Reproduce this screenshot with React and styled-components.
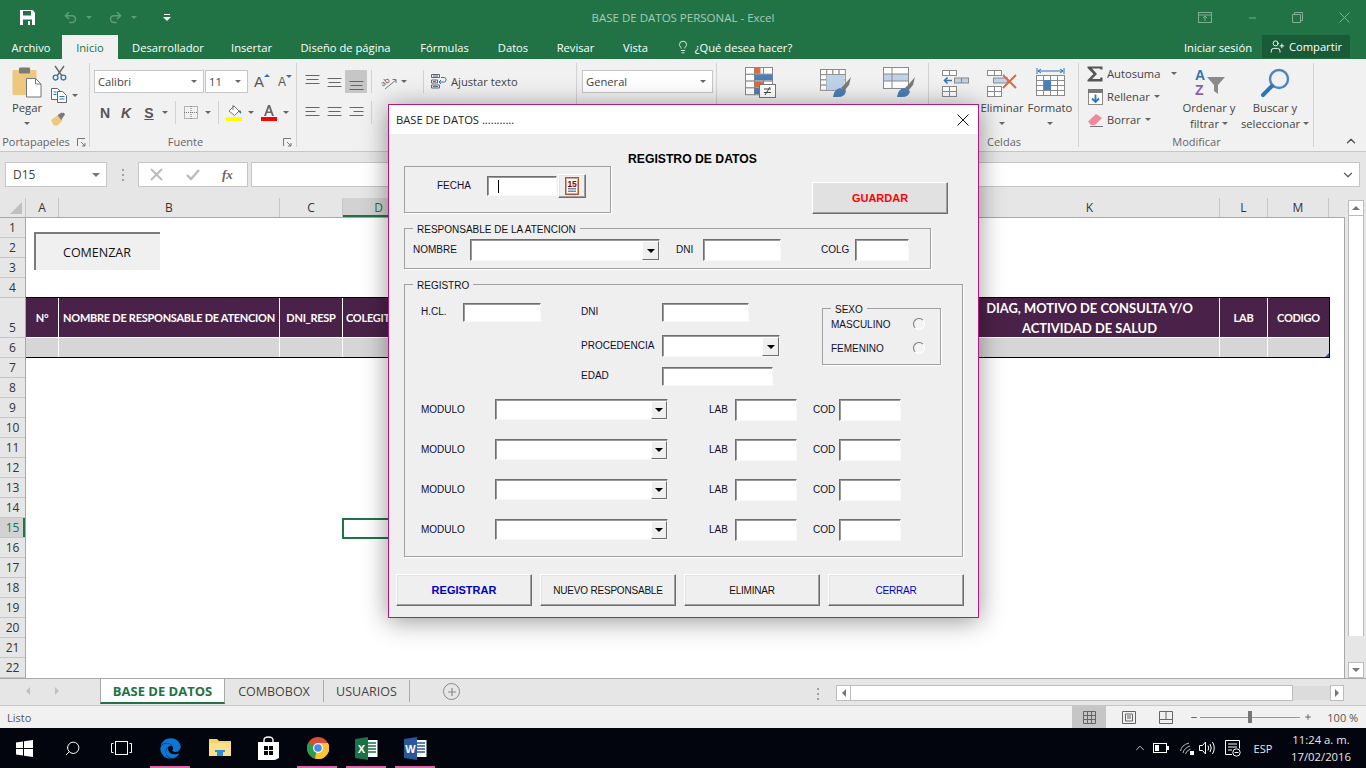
import React from 'react';
import styled, { createGlobalStyle } from 'styled-components';
import { FaEdge } from 'react-icons/fa';
import { Undo2, Redo2, ChevronUp, ChevronDown, UserPlus, Lightbulb, Search, Plus, Minus } from 'lucide-react';

const GlobalStyle = createGlobalStyle`
  html, body { margin: 0; padding: 0; height: 100%; overflow: hidden; }
  body { background: #fff; font-family: "Open Sans", "Noto Sans", sans-serif; font-size: 12px; color: #444; }
  * { box-sizing: border-box; }
  #root { height: 768px; }
`;

const Page = styled.div`
  position: relative;
  width: 1366px;
  height: 768px;
  display: flex;
  flex-direction: column;
  overflow: hidden;
`;

// ---------- title bar + tabs
const TitleBar = styled.div`
  height: 35px;
  background: #217346;
  display: flex;
  align-items: center;
  padding-left: 20px;
  color: #a9cbb7;
`;
const QatSlot = styled.div`
  display: flex;
  align-items: center;
  justify-content: center;
  width: ${p => p.$w}px;
  margin-left: ${p => p.$ml || 0}px;
  color: ${p => p.$c || '#5f9c7c'};
`;
const Caret = styled.span`
  display: inline-block;
  width: 0;
  height: 0;
  border-left: 3px solid transparent;
  border-right: 3px solid transparent;
  border-top: 3px solid ${p => p.$c || '#666'};
  margin-left: ${p => p.$ml || 0}px;
  flex: none;
`;
const WindowTitle = styled.div`
  width: ${p => p.$w}px;
  margin-left: ${p => p.$ml}px;
  text-align: center;
  font-size: 11.5px;
  white-space: nowrap;
`;
const TabBar = styled.div`
  height: 24px;
  background: #217346;
  display: flex;
  align-items: stretch;
  color: #fff;
`;
const Tab = styled.div`
  width: ${p => p.$w}px;
  margin-left: ${p => p.$ml || 0}px;
  display: flex;
  align-items: center;
  justify-content: center;
  font-size: 11.2px;
  white-space: nowrap;
  background: ${p => (p.$active ? '#f1f1f1' : 'transparent')};
  color: ${p => (p.$active ? '#217346' : '#fff')};
`;
const ShareButton = styled.div`
  width: 88px;
  margin-left: 4px;
  height: 23px;
  background: #195a37;
  display: flex;
  align-items: center;
  justify-content: center;
  gap: 4px;
  font-size: 11.2px;
`;

// ---------- ribbon
const Ribbon = styled.div`
  height: 93px;
  background: #f1f1f1;
  border-bottom: 1px solid #c6c6c6;
  display: flex;
  flex: none;
`;
const RibbonGroup = styled.div`
  position: relative;
  width: ${p => p.$w}px;
  display: flex;
  flex-direction: column;
  padding: 4px 0 0 0;
  &::after {
    content: '';
    position: absolute;
    right: 0;
    top: 4px;
    bottom: 4px;
    width: 1px;
    background: #d2d2d2;
  }
`;
const GroupBody = styled.div`
  flex: 1;
  display: flex;
  flex-direction: ${p => (p.$col ? 'column' : 'row')};
  padding-left: ${p => p.$pl || 0}px;
  min-height: 0;
`;
const GroupLabel = styled.div`
  height: 18px;
  line-height: 18px;
  text-align: center;
  font-size: 11px;
  color: #666;
  position: relative;
  white-space: nowrap;
  padding-right: ${p => p.$pr || 0}px;
`;
const Launcher = styled.svg`
  position: absolute;
  right: ${p => p.$r || 3}px;
  top: 5px;
`;
const ToolRow = styled.div`
  display: flex;
  align-items: center;
  height: ${p => p.$h || 23}px;
  margin-top: ${p => p.$mt || 0}px;
`;
const Tool = styled.div`
  display: flex;
  align-items: center;
  justify-content: center;
  flex: none;
  width: ${p => p.$w}px;
  height: 100%;
  margin-left: ${p => p.$ml || 0}px;
  background: ${p => (p.$on ? '#c6c6c6' : 'transparent')};
`;
const ToolSep = styled.div`
  width: 1px;
  height: 23px;
  background: #d2d2d2;
  margin-left: ${p => p.$ml || 0}px;
  flex: none;
`;
const RibbonCombo = styled.div`
  width: ${p => p.$w}px;
  height: 23px;
  margin-left: ${p => p.$ml || 0}px;
  background: #fff;
  border: 1px solid #c6c6c6;
  display: flex;
  align-items: center;
  justify-content: space-between;
  padding: 0 6px 0 3px;
  font-size: 11.2px;
  color: #444;
  flex: none;
`;
const FontLetter = styled.span`
  font-family: "Liberation Sans", sans-serif;
  font-weight: ${p => (p.$light ? 400 : 700)};
  font-size: ${p => p.$size || 14}px;
  font-style: ${p => (p.$i ? 'italic' : 'normal')};
  text-decoration: ${p => (p.$u ? 'underline' : 'none')};
  color: #555;
`;
const GrowMark = styled.span`
  width: 0;
  height: 0;
  align-self: flex-start;
  margin-top: ${p => (p.$down ? 5 : 4)}px;
  border-left: 3px solid transparent;
  border-right: 3px solid transparent;
  border-top: ${p => (p.$down ? '3px solid #2e75b6' : '0')};
  border-bottom: ${p => (p.$down ? '0' : '3px solid #2e75b6')};
`;
const SmallText = styled.span`
  font-size: 11.2px;
  color: #444;
  white-space: nowrap;
  margin-left: ${p => p.$ml || 0}px;
`;
const BigButton = styled.div`
  width: ${p => p.$w}px;
  margin-left: ${p => p.$ml || 0}px;
  padding-top: 4px;
  display: flex;
  flex-direction: column;
  align-items: center;
  font-size: 11.3px;
  line-height: 16px;
  color: #444;
  flex: none;
  white-space: nowrap;
`;
const BigIcon = styled.div`
  height: 31px;
  display: flex;
  align-items: center;
  justify-content: center;
  margin-bottom: 2px;
`;
const CaretLine = styled.div`
  height: 15px;
  display: flex;
  align-items: center;
  justify-content: center;
  gap: 3px;
`;
const StackColumn = styled.div`
  display: flex;
  flex-direction: column;
  width: ${p => p.$w}px;
  margin-left: ${p => p.$ml || 0}px;
  margin-top: ${p => p.$mt || 0}px;
  flex: none;
`;
const StackItem = styled.div`
  height: 23px;
  display: flex;
  align-items: center;
  font-size: 11.2px;
  color: #444;
  white-space: nowrap;
  gap: ${p => p.$gap ?? 4}px;
`;
const IconBox = styled.span`
  width: 16px;
  display: flex;
  justify-content: center;
  flex: none;
`;
const CollapseSlot = styled.div`
  flex: 1;
  display: flex;
  align-items: flex-end;
  justify-content: flex-end;
  padding: 0 8px 3px 0;
  color: #555;
`;

// ---------- formula bar
const FormulaBar = styled.div`
  height: 46px;
  flex: none;
  background: #e6e6e6;
  padding: 10px 6px 0 5px;
  display: flex;
  align-items: flex-start;
`;
const NameBox = styled.div`
  width: 102px;
  height: 25px;
  background: #fff;
  border: 1px solid #c6c6c6;
  display: flex;
  align-items: center;
  justify-content: space-between;
  padding: 0 6px 0 7px;
  font-size: 12px;
  color: #444;
`;
const Grip = styled.div`
  width: 2px;
  height: 12px;
  margin: 7px 14px 0 15px;
  background: repeating-linear-gradient(to bottom, #a0a0a0 0 2px, transparent 2px 5px);
`;
const FxBox = styled.div`
  width: 110px;
  height: 25px;
  background: #fff;
  border: 1px solid #c6c6c6;
  display: flex;
  align-items: center;
  justify-content: space-around;
  padding: 0 3px 0 0;
`;
const FxText = styled.span`
  font-family: "Liberation Serif", serif;
  font-style: italic;
  font-weight: 700;
  font-size: 13px;
  color: #666;
`;
const FormulaInput = styled.div`
  flex: 1;
  margin-left: 3px;
  height: 25px;
  background: #fff;
  border: 1px solid #c6c6c6;
  display: flex;
  align-items: center;
  justify-content: flex-end;
  padding-right: 4px;
  color: #666;
`;

// ---------- sheet
const SheetArea = styled.div`
  position: relative;
  height: 480px;
  flex: none;
  display: flex;
  background: #e6e6e6;
`;
const SheetMain = styled.div`
  width: 1345px;
  display: flex;
  flex-direction: column;
`;
const ColumnHead = styled.div`
  height: 20px;
  flex: none;
  display: flex;
  border-bottom: 1px solid #a8a8a8;
`;
const Corner = styled.div`
  width: 26px;
  position: relative;
  border-right: 1px solid #c6c6c6;
  &::after {
    content: '';
    position: absolute;
    right: 3px;
    bottom: 3px;
    border-style: solid;
    border-width: 0 0 12px 12px;
    border-color: transparent transparent #c0c0c0 transparent;
  }
`;
const ColCell = styled.div`
  width: ${p => p.$w}px;
  flex: none;
  text-align: center;
  line-height: 19px;
  font-size: 12px;
  color: ${p => (p.$sel ? '#217346' : '#333')};
  background: ${p => (p.$sel ? '#d2d2d2' : 'transparent')};
  border-right: 1px solid #c6c6c6;
  box-shadow: ${p => (p.$sel ? 'inset 0 -2px 0 #217346' : 'none')};
`;
const SheetBody = styled.div`
  flex: 1;
  display: flex;
  min-height: 0;
`;
const RowHeads = styled.div`
  width: 26px;
  flex: none;
  display: flex;
  flex-direction: column;
  border-right: 1px solid #a8a8a8;
`;
const RowCell = styled.div`
  height: ${p => p.$h}px;
  flex: none;
  display: flex;
  align-items: flex-end;
  justify-content: center;
  font-size: 12px;
  line-height: 18px;
  color: ${p => (p.$sel ? '#217346' : '#333')};
  background: ${p => (p.$sel ? '#d2d2d2' : 'transparent')};
  border-bottom: 1px solid #c6c6c6;
  box-shadow: ${p => (p.$sel ? 'inset -2px 0 0 #217346' : 'none')};
`;
const CellArea = styled.div`
  position: relative;
  flex: 1;
  background: #fff;
  padding-top: 79px;
  overflow: hidden;
  border-right: 1px solid #a8a8a8;
`;
const DataTable = styled.div`
  width: 1304px;
  border: solid #000;
  border-width: 1px 1px 1px 0;
`;
const TableRow = styled.div`
  display: flex;
  height: ${p => p.$h}px;
  background: ${p => p.$bg};
  border-top: ${p => (p.$split ? '1px solid #fff' : '0')};
`;
const TableCell = styled.div`
  width: ${p => p.$w}px;
  flex: none;
  display: flex;
  align-items: center;
  justify-content: ${p => (p.$left ? 'flex-start' : 'center')};
  padding: 0 ${p => (p.$left ? 3 : 0)}px;
  text-align: center;
  font-family: Lato, "Open Sans", sans-serif;
  font-weight: 700;
  font-size: ${p => (p.$big ? 12.9 : 11)}px;
  letter-spacing: ${p => (p.$big ? 0 : -0.27)}px;
  line-height: 20px;
  color: #fff;
  white-space: nowrap;
  border-right: 1px solid #fff;
  &:last-child { border-right: 0; }
`;
const ResizeMark = styled.div`
  position: absolute;
  left: 1299px;
  top: 135px;
  border-style: solid;
  border-width: 0 0 4px 4px;
  border-color: transparent transparent #3b55b0 transparent;
`;
const StartButton = styled.div`
  position: absolute;
  left: 8px;
  top: 14px;
  width: 126px;
  height: 38px;
  background: #f0f0f0;
  border-top: 2px solid #7a7a7a;
  border-left: 2px solid #7a7a7a;
  display: flex;
  align-items: center;
  justify-content: center;
  font-size: 12.5px;
  color: #111;
  padding-right: 2px;
`;
const SelectedCell = styled.div`
  position: absolute;
  left: 316px;
  top: 300px;
  width: 70px;
  height: 21px;
  border: 2px solid #217346;
`;
const VScroll = styled.div`
  width: 21px;
  padding: 2px 2px 0 3px;
  display: flex;
  flex-direction: column;
  background: #e6e6e6;
`;
const ScrollButton = styled.div`
  width: ${p => p.$w || 16}px;
  height: ${p => p.$h || 16}px;
  flex: none;
  background: #fff;
  border: 1px solid #bdbdbd;
  display: flex;
  align-items: center;
  justify-content: center;
`;
const VThumb = styled.div`
  flex: 1;
  background: #fff;
  border: 1px solid #bdbdbd;
  border-top: 0;
  border-bottom: 0;
  margin-bottom: 26px;
  width: 16px;
`;
const Tri = styled.span`
  width: 0;
  height: 0;
  border-style: solid;
  border-width: ${p => ({
    up: '0 4px 4px 4px',
    down: '4px 4px 0 4px',
    left: '4px 4px 4px 0',
    right: '4px 0 4px 4px',
  }[p.$d])};
  border-color: ${p => ({
    up: `transparent transparent ${p.$c || '#777'} transparent`,
    down: `${p.$c || '#777'} transparent transparent transparent`,
    left: `transparent ${p.$c || '#777'} transparent transparent`,
    right: `transparent transparent transparent ${p.$c || '#777'}`,
  }[p.$d])};
`;

// ---------- sheet tabs, status
const SheetTabs = styled.div`
  height: 28px;
  flex: none;
  background: #e6e6e6;
  border-top: 1px solid #a8a8a8;
  border-bottom: 1px solid #c6c6c6;
  display: flex;
  align-items: flex-start;
`;
const TabNav = styled.div`
  width: 100px;
  height: 24px;
  display: flex;
  align-items: center;
  padding-left: 26px;
  gap: 25px;
`;
const SheetTab = styled.div`
  width: ${p => p.$w}px;
  height: ${p => (p.$active ? 25 : 22)}px;
  margin-top: ${p => (p.$active ? 0 : 1)}px;
  display: flex;
  align-items: center;
  justify-content: center;
  font-size: ${p => (p.$active ? 13 : 12.5)}px;
  white-space: nowrap;
  background: ${p => (p.$active ? '#fff' : 'transparent')};
  color: ${p => (p.$active ? '#217346' : '#444')};
  font-weight: ${p => (p.$active ? 700 : 400)};
  border-bottom: ${p => (p.$active ? '2px solid #217346' : '0')};
  border-left: ${p => (p.$active ? '1px solid #a8a8a8' : '0')};
  border-right: 1px solid #a8a8a8;
`;
const AddSheet = styled.div`
  width: 17px;
  height: 17px;
  margin: 4px 0 0 33px;
  border: 1.5px solid #888;
  border-radius: 50%;
  display: flex;
  align-items: center;
  justify-content: center;
  color: #888;
`;
const HScrollWrap = styled.div`
  margin-left: 376px;
  display: flex;
  align-items: center;
  height: 14px;
  margin-top: 7px;
  width: 508px;
  position: relative;
`;
const HGrip = styled.div`
  position: absolute;
  left: -19px;
  top: 2px;
  width: 2px;
  height: 12px;
  background: repeating-linear-gradient(to bottom, #a0a0a0 0 2px, transparent 2px 5px);
`;
const HThumb = styled.div`
  width: 442px;
  height: 16px;
  background: #fff;
  border: 1px solid #bdbdbd;
  border-left: 0;
`;
const HTrack = styled.div`
  flex: 1;
  height: 14px;
  background: #dcdcdc;
`;
const StatusBar = styled.div`
  height: 22px;
  flex: none;
  background: #f1f1f1;
  display: flex;
  align-items: center;
  padding-left: 7px;
  font-size: 11px;
  color: #555;
`;
const ViewButton = styled.div`
  width: ${p => p.$w}px;
  height: 22px;
  margin-left: ${p => p.$ml || 0}px;
  background: ${p => (p.$on ? '#c6c6c6' : 'transparent')};
  display: flex;
  align-items: center;
  justify-content: center;
  flex: none;
`;
const ZoomTrack = styled.div`
  position: relative;
  width: 100px;
  height: 1px;
  background: #999;
  margin: 0 4px 0 2px;
`;
const ZoomKnob = styled.div`
  position: absolute;
  left: 48px;
  top: -6px;
  width: 4px;
  height: 12px;
  background: #777;
`;
const ZoomValue = styled.span`
  margin-left: 15px;
  white-space: nowrap;
`;

// ---------- taskbar
const Taskbar = styled.div`
  height: 40px;
  flex: none;
  background: #02050e;
  display: flex;
  align-items: center;
  color: #e8e8e8;
`;
const TaskSlot = styled.div`
  position: relative;
  width: ${p => p.$w || 49}px;
  height: 40px;
  flex: none;
  display: flex;
  align-items: center;
  justify-content: center;
  &::after {
    content: '';
    display: ${p => (p.$open ? 'block' : 'none')};
    position: absolute;
    left: 4px;
    right: 5px;
    bottom: 0;
    height: 2px;
    background: #d868a8;
  }
`;
const TrayItem = styled.div`
  width: ${p => p.$w}px;
  margin-left: ${p => p.$ml || 0}px;
  display: flex;
  align-items: center;
  justify-content: center;
  flex: none;
  font-size: 11px;
`;
const Clock = styled.div`
  width: 70px;
  margin-left: 13px;
  text-align: center;
  font-size: 11.3px;
  line-height: 17px;
  white-space: nowrap;
`;

// ---------- userform dialog
const Dialog = styled.div`
  position: absolute;
  left: 388px;
  top: 104px;
  width: 591px;
  height: 514px;
  background: #efefef;
  border: 1px solid #b5197f;
  box-shadow: 0 3px 24px rgba(0, 0, 0, 0.42);
  font-family: "Liberation Sans", Arial, sans-serif;
  font-size: 10px;
  color: #111;
  display: flex;
  flex-direction: column;
`;
const DialogTitle = styled.div`
  height: 29px;
  flex: none;
  background: #fff;
  display: flex;
  align-items: center;
  justify-content: space-between;
  padding: 0 9px 0 7px;
  font-family: "Open Sans", sans-serif;
  font-size: 11.2px;
  color: #222;
`;
const DialogBody = styled.div`
  flex: 1;
  padding: 16px 0 0 15px;
`;
const TopRow = styled.div`
  display: flex;
  height: 63px;
  align-items: flex-start;
`;
const FechaFrame = styled.div`
  width: 207px;
  height: 47px;
  margin-top: 16px;
  border: 1px solid #a0a0a0;
  box-shadow: 1px 1px 0 #fff;
  display: flex;
  align-items: center;
  padding: 0 0 8px 32px;
  flex: none;
`;
const Heading = styled.div`
  width: 201px;
  padding: 2px 0 0 17px;
  font-weight: 700;
  font-size: 12.2px;
  color: #000;
  flex: none;
  white-space: nowrap;
`;
const RaisedButton = styled.div`
  width: ${p => p.$w || 136}px;
  height: ${p => p.$h || 32}px;
  margin-top: ${p => p.$mt || 0}px;
  background: ${p => p.$bg || '#efefef'};
  border: 1px solid;
  border-color: #fff #6e6e6e #6e6e6e #fff;
  box-shadow: inset -1px -1px 0 #a0a0a0, inset 1px 1px 0 #e2e2e2;
  display: flex;
  align-items: center;
  justify-content: center;
  color: ${p => p.$c || '#111'};
  font-weight: ${p => (p.$bold ? 700 : 400)};
  font-size: ${p => (p.$bold ? 11 : 10)}px;
  letter-spacing: ${p => (p.$bold ? 0 : -0.2)}px;
  flex: none;
  white-space: nowrap;
`;
const CalendarButton = styled(RaisedButton)`
  width: 28px;
  height: 24px;
  margin-left: 1px;
`;
const GroupBox = styled.div`
  position: relative;
  width: ${p => p.$w}px;
  height: ${p => p.$h}px;
  margin-top: ${p => p.$mt || 0}px;
  margin-left: ${p => p.$ml || 0}px;
  border: 1px solid #a0a0a0;
  box-shadow: 1px 1px 0 #fff;
  flex: none;
`;
const Legend = styled.div`
  position: absolute;
  top: -6px;
  left: 8px;
  padding: 0 4px;
  background: #efefef;
  line-height: 13px;
  white-space: nowrap;
`;
const FieldRow = styled.div`
  display: flex;
  align-items: flex-start;
  padding: ${p => p.$pad || 0};
  height: ${p => (p.$h ? `${p.$h}px` : 'auto')};
`;
const Label = styled.div`
  width: ${p => (p.$w ? `${p.$w}px` : 'auto')};
  margin-left: ${p => p.$ml || 0}px;
  line-height: ${p => p.$lh || 22}px;
  white-space: nowrap;
  flex: none;
  color: #101030;
`;
const Sunken = styled.div`
  width: ${p => p.$w}px;
  height: ${p => p.$h}px;
  background: #fff;
  border: 1px solid;
  border-color: #6e6e6e #f8f8f8 #f8f8f8 #6e6e6e;
  box-shadow: inset 1px 1px 0 #9a9a9a;
  flex: none;
  display: flex;
  align-items: stretch;
  justify-content: flex-end;
  position: relative;
`;
const DropButton = styled.div`
  width: ${p => p.$w || 17}px;
  margin: 1px 0 0;
  background: #efefef;
  border: 1px solid;
  border-color: #fff #6e6e6e #6e6e6e #fff;
  display: flex;
  align-items: center;
  justify-content: center;
`;
const TextCaret = styled.div`
  position: absolute;
  left: 10px;
  top: 3px;
  width: 1px;
  height: 13px;
  background: #000;
`;
const RegistroTop = styled.div`
  display: flex;
  align-items: flex-start;
  padding: 18px 0 0 16px;
  height: 114px;
`;
const PatientGrid = styled.div`
  display: grid;
  grid-template-columns: 81px auto;
  grid-template-rows: 32px 32px 19px;
  margin-left: 40px;
  justify-items: start;
  align-items: start;
`;
const SexRows = styled.div`
  margin-top: 4px;
`;
const SexRow = styled.div`
  display: flex;
  align-items: center;
  height: 24px;
  padding-left: 8px;
`;
const Radio = styled.div`
  width: 12px;
  height: 12px;
  margin-top: -2px;
  border-radius: 50%;
  background: #f4f4f4;
  border: 1px solid;
  border-color: #777 #fff #fff #777;
`;
const ModuleList = styled.div`
  display: flex;
  flex-direction: column;
  gap: 18px;
  padding-left: 16px;
`;
const ActionRow = styled.div`
  display: flex;
  gap: 8px;
  margin: 17px 0 0 -8px;
`;

// ---------- icons
const AlignIcon = ({ y = 0, mode = 'center' }) => {
  const rows = [14, 12, 14];
  return (
    <svg width="15" height="16" viewBox="0 0 15 16" fill="none" stroke="#666" strokeWidth="1">
      {rows.map((w, i) => {
        const len = mode === 'left' || mode === 'right' ? (i === 1 ? 10 : 14) : w;
        const x = mode === 'left' ? 0.5 : mode === 'right' ? 14.5 - len : 7.5 - len / 2;
        const yy = y + 2.5 + i * 4;
        return <path key={i} d={`M${x} ${yy}h${len}`} />;
      })}
    </svg>
  );
};

const CellsIcon = ({ children, w = 30, h = 30 }) => (
  <svg width={w} height={h} viewBox={`0 0 ${w} ${h}`}>{children}</svg>
);

const GridLines = ({ x, y, cols, rows, cw, ch, stroke = '#8a8a8a', fill = '#fff' }) => (
  <g>
    {Array.from({ length: cols * rows }).map((_, i) => (
      <rect
        key={i}
        x={x + (i % cols) * cw + 0.5}
        y={y + Math.floor(i / cols) * ch + 0.5}
        width={cw}
        height={ch}
        fill={fill}
        stroke={stroke}
      />
    ))}
  </g>
);

const PasteIcon = () => (
  <svg width="31" height="31" viewBox="0 0 31 31">
    <rect x="0.5" y="3" width="24" height="25" rx="1" fill="#edc87e" />
    <rect x="7" y="0.5" width="11" height="6" rx="1" fill="#7a7a7a" />
    <path d="M14.5 11.5h9l5.5 5.5v13h-14.5z" fill="#fff" stroke="#777" />
    <path d="M23.5 11.5v5.5h5.5" fill="none" stroke="#777" />
  </svg>
);

const CutIcon = () => (
  <svg width="15" height="16" viewBox="0 0 15 16" fill="none">
    <path d="M3 1l7 10M12 1L5 11" stroke="#666" strokeWidth="1.4" />
    <circle cx="3.6" cy="12.6" r="2.4" stroke="#2e75b6" strokeWidth="1.3" />
    <circle cx="11.4" cy="12.6" r="2.4" stroke="#2e75b6" strokeWidth="1.3" />
  </svg>
);

const CopyIcon = () => (
  <svg width="16" height="15" viewBox="0 0 16 15" fill="#fff" stroke="#666">
    <path d="M0.5 0.5h6l3 3v8h-9z" />
    <path d="M6.5 3.5h5l4 4v7h-9z" />
    <path d="M2.5 4h3M2.5 6.5h3M8.5 8.5h5M8.5 11h5" stroke="#2e75b6" fill="none" />
  </svg>
);

const BrushIcon = () => (
  <svg width="17" height="15" viewBox="0 0 17 15">
    <path d="M0 9l7-5 5 6-5 5H3z" fill="#edc87e" />
    <path d="M7 4l4-3 1 1 1-1 2 2-2 3-1 1 0 1-1 1z" fill="#7a7a7a" />
  </svg>
);

const FillIcon = () => (
  <svg width="17" height="17" viewBox="0 0 17 17">
    <path d="M3 7l5-5 5 5-4.5 4.5z" fill="#fff" stroke="#777" />
    <path d="M7 1V6" stroke="#777" />
    <path d="M14 6q2 2 1 4-1-2-3-2z" fill="#2e75b6" />
    <rect x="0" y="13" width="16" height="4" fill="#ffff00" />
  </svg>
);

const FontColorIcon = () => (
  <svg width="16" height="17" viewBox="0 0 16 17">
    <path d="M3 12L7 1h2l4 11h-2l-1-3H6l-1 3zM6.6 7.4h2.8L8 3.4z" fill="#666" />
    <rect x="0" y="13" width="16" height="4" fill="#ff0000" />
  </svg>
);

const OrientationIcon = () => (
  <svg width="18" height="16" viewBox="0 0 18 16">
    <text x="2" y="11" transform="rotate(-38 6 9)" fontFamily="Open Sans" fontSize="8" fill="#555">ab</text>
    <path d="M6 15L17 6M13.5 5.5H17V9" stroke="#777" fill="none" />
  </svg>
);

const WrapIcon = () => (
  <svg width="16" height="15" viewBox="0 0 16 15" fill="none" stroke="#666">
    <path d="M0.5 0.5h8v3h-8zM0.5 6h6v3h-6zM0.5 11h8v3h-8z" />
    <path d="M2 2h5M2 7.5h3M2 12.5h5" stroke="#2e75b6" />
    <path d="M10 3.5h3.5q1.5 0 1.5 2.2t-1.5 2.3H8.5" stroke="#2e75b6" />
    <path d="M10 6L8 8l2 2" stroke="#2e75b6" />
  </svg>
);

const CondFormatIcon = () => (
  <CellsIcon w={31} h={31}>
    <GridLines x={0} y={0} cols={3} rows={4} cw={9} ch={6.8} />
    <rect x={9.5} y={1} width={6} height={5.8} fill="#dc6a43" />
    <rect x={9.5} y={7.6} width={18} height={5.6} fill="#4a7fb8" />
    <rect x={9.5} y={14.4} width={9} height={5.6} fill="#dc6a43" />
    <rect x={9.5} y={21} width={5} height={6} fill="#4a7fb8" />
    <rect x={14.5} y={17.5} width={16} height={13} fill="#fff" stroke="#777" />
    <path d="M19 22h7M19 25.5h7M25 20l-5 8" stroke="#444" fill="none" />
  </CellsIcon>
);

const TableFormatIcon = () => (
  <CellsIcon w={31} h={31}>
    <GridLines x={0} y={2} cols={4} rows={4} cw={6.2} ch={5.2} />
    <rect x={6.5} y={8} width={18} height={15} fill="#bfd2e8" />
    <path d="M31 10l-6 7-4 4 3 3 5-6z" fill="#7a7a7a" />
    <path d="M20 21q-6 1-7 9h5q7 0 8-6z" fill="#4a7fb8" />
  </CellsIcon>
);

const CellStyleIcon = () => (
  <CellsIcon w={32} h={31}>
    <rect x={0.5} y={0.5} width={25} height={21} fill="#fff" stroke="#8a8a8a" />
    <rect x={0.5} y={7} width={25} height={7} fill="#bfd2e8" stroke="#8a8a8a" />
    <path d="M9 0v22" stroke="#8a8a8a" />
    <path d="M32 10l-6 7-4 4 3 3 5-6z" fill="#7a7a7a" />
    <path d="M21 21q-6 1-7 9h5q7 0 8-6z" fill="#4a7fb8" />
  </CellsIcon>
);

const InsertCellsIcon = () => (
  <CellsIcon w={27} h={28}>
    <GridLines x={0} y={1} cols={2} rows={1} cw={7} ch={5} />
    <rect x={12.5} y={9} width={14} height={5} fill="#bfd2e8" stroke="#8a8a8a" />
    <path d="M19.5 9v5" stroke="#8a8a8a" />
    <path d="M10 11.5H3M5.5 8.5l-3 3 3 3" stroke="#2e75b6" strokeWidth="1.6" fill="none" />
    <GridLines x={0} y={17} cols={2} rows={2} cw={7} ch={5} />
  </CellsIcon>
);

const DeleteCellsIcon = () => (
  <CellsIcon w={31} h={28}>
    <GridLines x={0} y={1} cols={2} rows={1} cw={7} ch={5} />
    <rect x={6.5} y={9} width={14} height={5} fill="#bfd2e8" stroke="#8a8a8a" />
    <GridLines x={0} y={17} cols={2} rows={2} cw={7} ch={5} />
    <path d="M16 6l13 13M29 6L16 19" stroke="#dc6a43" strokeWidth="2" />
  </CellsIcon>
);

const FormatCellsIcon = () => (
  <CellsIcon w={29} h={30}>
    <path d="M1 0v6M28 0v6M2 3h25M5 1L2 3l3 2M24 1l3 2-3 2" stroke="#2e75b6" fill="none" />
    <GridLines x={0} y={7} cols={4} rows={4} cw={7} ch={5} />
    <rect x={8} y={12} width={7} height={10} fill="#4a7fb8" />
  </CellsIcon>
);

const SigmaIcon = () => (
  <svg width="16" height="16" viewBox="0 0 16 16">
    <path d="M0.5 0.5h15v3h-2l-.5-1H5l5 5.5L5 13h8l.5-1.5h2v4H.5v-1.5L6.5 8 .5 2z" fill="#555" />
  </svg>
);

const FillDownIcon = () => (
  <svg width="15" height="16" viewBox="0 0 15 16">
    <rect x="0.5" y="0.5" width="14" height="15" fill="#fff" stroke="#8a8a8a" />
    <rect x="0" y="0" width="15" height="4" fill="#777" />
    <path d="M7.5 5.5v7M4 9.5l3.5 3.5L11 9.5" stroke="#2e75b6" strokeWidth="1.8" fill="none" />
  </svg>
);

const EraserIcon = () => (
  <svg width="15" height="14" viewBox="0 0 15 14">
    <path d="M0 8.5L8 1l6 4-7 7H3z" fill="#ee8a9a" />
    <path d="M2 13.5h13" stroke="#777" />
  </svg>
);

const SortIcon = () => (
  <svg width="31" height="31" viewBox="0 0 31 31">
    <text x="1" y="13" fontFamily="Liberation Sans" fontWeight="700" fontSize="14" fill="#2e75b6">A</text>
    <text x="1" y="28" fontFamily="Liberation Sans" fontWeight="700" fontSize="14" fill="#8a5fb0">Z</text>
    <path d="M13 10h18l-7 8v9l-4-3v-6z" fill="#8a8a8a" />
  </svg>
);

const MagnifierIcon = () => (
  <svg width="29" height="30" viewBox="0 0 29 30" fill="none">
    <circle cx="18" cy="11" r="9" stroke="#4a85c0" strokeWidth="2.4" />
    <path d="M11 18L2 27" stroke="#2e75b6" strokeWidth="4" strokeLinecap="round" />
  </svg>
);

const CalendarIcon = () => (
  <svg width="14" height="18" viewBox="0 0 14 18">
    <rect x="0.5" y="0.5" width="13" height="17" fill="#d4a58e" stroke="#b0543a" />
    <rect x="2" y="2" width="10" height="14" fill="#fff" />
    <text x="7" y="9.5" textAnchor="middle" fontFamily="Liberation Sans" fontWeight="700" fontSize="8.5" fill="#800000">15</text>
    <path d="M3 11.5h8M3 13h8M3 14.5h8" stroke="#6a87b0" />
  </svg>
);

const WinLogo = () => (
  <svg width="17" height="17" viewBox="0 0 17 17" fill="#fff">
    <path d="M0 2.5l7-1v6.5H0zM8 1.3L17 0v8H8zM0 9h7v6.5l-7-1zM8 9h9v8l-9-1.3z" />
  </svg>
);

const TaskViewIcon = () => (
  <svg width="21" height="14" viewBox="0 0 21 14" fill="none" stroke="#fff">
    <rect x="4.5" y="0.5" width="12" height="13" />
    <path d="M2.5 2.5h-2v9h2M18.5 2.5h2v9h-2" />
  </svg>
);

const ExplorerIcon = () => (
  <svg width="22" height="20" viewBox="0 0 22 20">
    <path d="M0 1h8l2 2h12v15H0z" fill="#f6d365" />
    <path d="M0 5h22v13H0z" fill="#fbe08a" />
    <path d="M6 12h10v2h-2v4H8v-4H6z" fill="#2a8fd8" />
  </svg>
);

const StoreIcon = () => (
  <svg width="21" height="24" viewBox="0 0 21 24">
    <path d="M6 6V4q0-3 4.5-3T15 4v2" fill="none" stroke="#fff" strokeWidth="1.4" />
    <path d="M0 6h21v16l-4 2H0z" fill="#fff" />
    <path d="M6 10h4v4H6zM11 10h4v4h-4zM6 15h4v4H6zM11 15h4v4h-4z" fill="#02050e" />
  </svg>
);

const ChromeIcon = () => (
  <svg width="22" height="22" viewBox="0 0 22 22">
    <circle cx="11" cy="11" r="11" fill="#dd4b39" />
    <path d="M11 11L1.4 5.6A11 11 0 0 0 8 21.6z" fill="#2c9b4b" />
    <path d="M11 6h10a11 11 0 0 1-13 15.6z" fill="#f7c52f" />
    <circle cx="11" cy="11" r="5" fill="#fff" />
    <circle cx="11" cy="11" r="3.8" fill="#4a88ee" />
  </svg>
);

const OfficeDoc = ({ main, letter }) => (
  <svg width="23" height="23" viewBox="0 0 23 23">
    <rect x="9" y="3" width="13.5" height="17" fill="#fff" />
    <path d="M11 6h10M11 9h10M11 12h10M11 15h10" stroke={main} strokeWidth="1.4" />
    <path d="M0 2l13-2v23L0 21z" fill={main} />
    <text x="6.5" y="15.5" textAnchor="middle" fontFamily="Liberation Sans" fontWeight="700" fontSize="11" fill="#fff">{letter}</text>
  </svg>
);

const BatteryIcon = () => (
  <svg width="16" height="10" viewBox="0 0 16 10">
    <rect x="0.5" y="0.5" width="13" height="9" fill="none" stroke="#fff" />
    <rect x="2" y="2" width="4" height="6" fill="#fff" />
    <rect x="14" y="3" width="2" height="4" fill="#fff" />
  </svg>
);

const WifiIcon = () => (
  <svg width="14" height="13" viewBox="0 0 14 13" fill="none" stroke="#bbb">
    <path d="M0.5 9Q1.5 3 9 1M3 11Q4 6 10 4M5.5 12Q6 9 10.5 7" />
    <rect x="10" y="9" width="4" height="4" fill="#fff" stroke="none" />
  </svg>
);

const SpeakerIcon = () => (
  <svg width="17" height="14" viewBox="0 0 17 14" fill="none" stroke="#fff">
    <path d="M0.5 4.5h3l3-3.5v12l-3-3.5h-3z" />
    <path d="M9 4.5q1.5 2.5 0 5M11 3q2.5 4 0 8M13.5 1q3.5 6 0 12" />
  </svg>
);

const NoteIcon = () => (
  <svg width="17" height="17" viewBox="0 0 17 17" fill="none" stroke="#fff">
    <path d="M7 14.5H0.5v-14h14v8" />
    <path d="M3 4h9M3 7h9M3 10h4" />
    <circle cx="11.5" cy="12.5" r="3.7" fill="#02050e" />
    <path d="M9.5 12.5h4" />
  </svg>
);

const LauncherIcon = ({ r }) => (
  <Launcher $r={r} width="9" height="9" viewBox="0 0 9 9" fill="none" stroke="#777">
    <path d="M0.5 8V0.5H8M4 4l4 4M8 5v3H5" />
  </Launcher>
);

const ROWS = Array.from({ length: 22 }, (_, i) => i + 1);

const ModuleRow = () => (
  <FieldRow $h={22}>
    <Label $w={74}>MODULO</Label>
    <Sunken $w={173} $h={21}><DropButton $w={16}><Tri $d="down" $c="#000" /></DropButton></Sunken>
    <Label $w={26} $ml={41}>LAB</Label>
    <Sunken $w={62} $h={22} />
    <Label $w={26} $ml={16}>COD</Label>
    <Sunken $w={62} $h={22} />
  </FieldRow>
);

export default function App() {
  return (
    <Page>
      <GlobalStyle />

      <TitleBar>
        <QatSlot $w={15} $c="#fff">
          <svg width="15" height="15" viewBox="0 0 15 15">
            <path d="M0 0h12.5L15 2.5V15H0z" fill="#fff" />
            <path d="M3 1h8v4.5H3zM3 9.5h9V15H3z" fill="#217346" />
            <path d="M8 11h2v4H8z" fill="#fff" />
          </svg>
        </QatSlot>
        <QatSlot $w={16} $ml={27}><Undo2 size={15} strokeWidth={2.4} /></QatSlot>
        <Caret $c="#5f9c7c" $ml={8} />
        <QatSlot $w={16} $ml={15}><Redo2 size={15} strokeWidth={2.4} /></QatSlot>
        <Caret $c="#5f9c7c" $ml={8} />
        <QatSlot $w={8} $ml={26} $c="#fff">
          <svg width="8" height="8" viewBox="0 0 8 8" fill="#fff">
            <path d="M1 0h6v1H1zM0 3h8L4 7z" />
          </svg>
        </QatSlot>
        <WindowTitle $w={200} $ml={412}>BASE DE DATOS PERSONAL - Excel</WindowTitle>
        <QatSlot $w={14} $ml={415} $c="#5f9c7c">
          <svg width="14" height="11" viewBox="0 0 14 11" fill="none" stroke="#7fb096">
            <rect x="0.5" y="0.5" width="13" height="10" />
            <path d="M0.5 3h13M7 9V4.5M5 6l2-2 2 2" />
          </svg>
        </QatSlot>
        <QatSlot $w={11} $ml={35}><Minus size={12} color="#7fb096" /></QatSlot>
        <QatSlot $w={11} $ml={34}>
          <svg width="11" height="11" viewBox="0 0 11 11" fill="none" stroke="#7fb096">
            <path d="M2.5 2.5V.5h8v8h-2M.5 2.5h8v8h-8z" />
          </svg>
        </QatSlot>
        <QatSlot $w={11} $ml={36}>
          <svg width="11" height="11" viewBox="0 0 11 11" fill="none" stroke="#7fb096">
            <path d="M.5.5l10 10M10.5.5l-10 10" />
          </svg>
        </QatSlot>
      </TitleBar>

      <TabBar>
        <Tab $w={62}>Archivo</Tab>
        <Tab $w={56} $active>Inicio</Tab>
        <Tab $w={100}>Desarrollador</Tab>
        <Tab $w={67}>Insertar</Tab>
        <Tab $w={121}>Diseño de página</Tab>
        <Tab $w={77}>Fórmulas</Tab>
        <Tab $w={60}>Datos</Tab>
        <Tab $w={65}>Revisar</Tab>
        <Tab $w={55}>Vista</Tab>
        <Tab $w={126} $ml={8}>
          <Lightbulb size={14} strokeWidth={1.4} style={{ marginRight: 5 }} />
          ¿Qué desea hacer?
        </Tab>
        <Tab $w={80} $ml={381}>Iniciar sesión</Tab>
        <ShareButton><UserPlus size={15} strokeWidth={1.5} />Compartir</ShareButton>
      </TabBar>

      <Ribbon>
        <RibbonGroup $w={90}>
          <GroupBody>
            <BigButton $w={40} $ml={7}>
              <BigIcon><PasteIcon /></BigIcon>
              <span>Pegar</span>
              <CaretLine><Caret /></CaretLine>
            </BigButton>
            <StackColumn $ml={4} $w={36} $mt={-2}>
              <StackItem><IconBox><CutIcon /></IconBox></StackItem>
              <StackItem $gap={5}><IconBox><CopyIcon /></IconBox><Caret /></StackItem>
              <StackItem><IconBox><BrushIcon /></IconBox></StackItem>
            </StackColumn>
          </GroupBody>
          <GroupLabel $pr={18}>Portapapeles<LauncherIcon r={4} /></GroupLabel>
        </RibbonGroup>

        <RibbonGroup $w={207}>
          <GroupBody $col $pl={4}>
            <ToolRow $mt={7}>
              <RibbonCombo $w={110}>Calibri<Caret /></RibbonCombo>
              <RibbonCombo $w={43} $ml={1}>11<Caret /></RibbonCombo>
              <Tool $w={18} $ml={5}><FontLetter $light $size={15}>A</FontLetter><GrowMark /></Tool>
              <Tool $w={18} $ml={5}><FontLetter $light $size={12}>A</FontLetter><GrowMark $down /></Tool>
            </ToolRow>
            <ToolRow $mt={7} $h={25}>
              <Tool $w={14} $ml={4}><FontLetter>N</FontLetter></Tool>
              <Tool $w={14} $ml={7}><FontLetter $i>K</FontLetter></Tool>
              <Tool $w={14} $ml={9}><FontLetter $u>S</FontLetter></Tool>
              <Caret $ml={6} />
              <ToolSep $ml={7} />
              <Tool $w={14} $ml={8}>
                <svg width="14" height="13" viewBox="0 0 14 13" fill="none" stroke="#777" strokeDasharray="1 1">
                  <rect x="0.5" y="0.5" width="13" height="12" />
                  <path d="M7 0v13M0 6.5h14" />
                </svg>
              </Tool>
              <Caret $ml={7} />
              <ToolSep $ml={7} />
              <Tool $w={17} $ml={7}><FillIcon /></Tool>
              <Caret $ml={5} />
              <Tool $w={17} $ml={6}><FontColorIcon /></Tool>
              <Caret $ml={6} />
            </ToolRow>
          </GroupBody>
          <GroupLabel $pr={16}>Fuente<LauncherIcon r={5} /></GroupLabel>
        </RibbonGroup>

        <RibbonGroup $w={280}>
          <GroupBody $col $pl={8}>
            <ToolRow $mt={7}>
              <Tool $w={15}><AlignIcon y={-1} /></Tool>
              <Tool $w={15} $ml={7}><AlignIcon y={2} /></Tool>
              <Tool $w={22} $ml={3} $on><AlignIcon y={5} /></Tool>
              <ToolSep $ml={4} />
              <Tool $w={18} $ml={7}><OrientationIcon /></Tool>
              <Caret $ml={4} />
              <ToolSep $ml={16} />
              <Tool $w={16} $ml={7}><WrapIcon /></Tool>
              <SmallText $ml={4}>Ajustar texto</SmallText>
            </ToolRow>
            <ToolRow $mt={7} $h={25}>
              <Tool $w={15}><AlignIcon mode="left" /></Tool>
              <Tool $w={15} $ml={7}><AlignIcon mode="center" /></Tool>
              <Tool $w={15} $ml={7}><AlignIcon mode="right" /></Tool>
              <ToolSep $ml={7} />
            </ToolRow>
          </GroupBody>
          <GroupLabel>Alineación</GroupLabel>
        </RibbonGroup>

        <RibbonGroup $w={140}>
          <GroupBody $col $pl={5}>
            <ToolRow $mt={7}>
              <RibbonCombo $w={131}>General<Caret /></RibbonCombo>
            </ToolRow>
          </GroupBody>
          <GroupLabel>Número</GroupLabel>
        </RibbonGroup>

        <RibbonGroup $w={212}>
          <GroupBody $pl={27}>
            <BigButton $w={32}><BigIcon><CondFormatIcon /></BigIcon></BigButton>
            <BigButton $w={32} $ml={43}><BigIcon><TableFormatIcon /></BigIcon></BigButton>
            <BigButton $w={32} $ml={32}><BigIcon><CellStyleIcon /></BigIcon></BigButton>
          </GroupBody>
          <GroupLabel>Estilos</GroupLabel>
        </RibbonGroup>

        <RibbonGroup $w={150}>
          <GroupBody $pl={5}>
            <BigButton $w={42}>
              <BigIcon><InsertCellsIcon /></BigIcon>
              <span>Insertar</span>
              <CaretLine><Caret /></CaretLine>
            </BigButton>
            <BigButton $w={48} $ml={2}>
              <BigIcon><DeleteCellsIcon /></BigIcon>
              <span>Eliminar</span>
              <CaretLine><Caret /></CaretLine>
            </BigButton>
            <BigButton $w={48}>
              <BigIcon><FormatCellsIcon /></BigIcon>
              <span>Formato</span>
              <CaretLine><Caret /></CaretLine>
            </BigButton>
          </GroupBody>
          <GroupLabel>Celdas</GroupLabel>
        </RibbonGroup>

        <RibbonGroup $w={235}>
          <GroupBody $pl={8}>
            <StackColumn $w={92} $mt={-1}>
              <StackItem><IconBox><SigmaIcon /></IconBox>Autosuma<Caret $ml={7} /></StackItem>
              <StackItem><IconBox><FillDownIcon /></IconBox>Rellenar<Caret /></StackItem>
              <StackItem><IconBox><EraserIcon /></IconBox>Borrar<Caret /></StackItem>
            </StackColumn>
            <BigButton $w={60}>
              <BigIcon><SortIcon /></BigIcon>
              <span>Ordenar y</span>
              <CaretLine>filtrar<Caret /></CaretLine>
            </BigButton>
            <BigButton $w={68} $ml={2}>
              <BigIcon><MagnifierIcon /></BigIcon>
              <span>Buscar y</span>
              <CaretLine>seleccionar<Caret /></CaretLine>
            </BigButton>
          </GroupBody>
          <GroupLabel>Modificar</GroupLabel>
        </RibbonGroup>

        <CollapseSlot><ChevronUp size={14} strokeWidth={2.4} /></CollapseSlot>
      </Ribbon>

      <FormulaBar>
        <NameBox>D15<Tri $d="down" $c="#777" /></NameBox>
        <Grip />
        <FxBox>
          <svg width="13" height="13" viewBox="0 0 13 13" stroke="#bbb" strokeWidth="2"><path d="M1 1l11 11M12 1L1 12" /></svg>
          <svg width="14" height="12" viewBox="0 0 14 12" fill="none" stroke="#bbb" strokeWidth="2.4"><path d="M1 6l4 4 8-9" /></svg>
          <FxText>fx</FxText>
        </FxBox>
        <FormulaInput><ChevronDown size={14} strokeWidth={2.4} /></FormulaInput>
      </FormulaBar>

      <SheetArea>
        <SheetMain>
          <ColumnHead>
            <Corner />
            <ColCell $w={33}>A</ColCell>
            <ColCell $w={221}>B</ColCell>
            <ColCell $w={63}>C</ColCell>
            <ColCell $w={72} $sel>D</ColCell>
            <ColCell $w={545} />
            <ColCell $w={260}>K</ColCell>
            <ColCell $w={48}>L</ColCell>
            <ColCell $w={61}>M</ColCell>
          </ColumnHead>
          <SheetBody>
            <RowHeads>
              {ROWS.map(n => (
                <RowCell key={n} $h={n === 5 ? 40 : 20} $sel={n === 15}>{n}</RowCell>
              ))}
            </RowHeads>
            <CellArea>
              <StartButton>COMENZAR</StartButton>
              <DataTable>
                <TableRow $h={39} $bg="#4a2249">
                  <TableCell $w={33}>N°</TableCell>
                  <TableCell $w={221}>NOMBRE DE RESPONSABLE DE ATENCION</TableCell>
                  <TableCell $w={63}>DNI_RESP</TableCell>
                  <TableCell $w={617} $left>COLEGITURA</TableCell>
                  <TableCell $w={260} $big>DIAG, MOTIVO DE CONSULTA Y/O<br />ACTIVIDAD DE SALUD</TableCell>
                  <TableCell $w={48}>LAB</TableCell>
                  <TableCell $w={61}>CODIGO</TableCell>
                </TableRow>
                <TableRow $h={20} $bg="#d6d6d6" $split>
                  <TableCell $w={33} />
                  <TableCell $w={221} />
                  <TableCell $w={63} />
                  <TableCell $w={617} />
                  <TableCell $w={260} />
                  <TableCell $w={48} />
                  <TableCell $w={61} />
                </TableRow>
              </DataTable>
              <ResizeMark />
              <SelectedCell />
            </CellArea>
          </SheetBody>
        </SheetMain>
        <VScroll>
          <ScrollButton><Tri $d="up" /></ScrollButton>
          <VThumb />
          <ScrollButton><Tri $d="down" /></ScrollButton>
        </VScroll>
      </SheetArea>

      <SheetTabs>
        <TabNav><Tri $d="left" $c="#c0c0c0" /><Tri $d="right" $c="#c0c0c0" /></TabNav>
        <SheetTab $w={125} $active>BASE DE DATOS</SheetTab>
        <SheetTab $w={99}>COMBOBOX</SheetTab>
        <SheetTab $w={86}>USUARIOS</SheetTab>
        <AddSheet><Plus size={12} strokeWidth={2.4} /></AddSheet>
        <HScrollWrap>
          <HGrip />
          <ScrollButton $w={15} $h={16}><Tri $d="left" /></ScrollButton>
          <HThumb />
          <HTrack />
          <ScrollButton $w={14} $h={16}><Tri $d="right" /></ScrollButton>
        </HScrollWrap>
      </SheetTabs>

      <StatusBar>
        Listo
        <ViewButton $w={34} $ml={1041} $on>
          <svg width="13" height="13" viewBox="0 0 13 13" fill="none" stroke="#666"><path d="M.5.5h12v12H.5zM4.5 0v13M8.5 0v13M0 4.5h13M0 8.5h13" /></svg>
        </ViewButton>
        <ViewButton $w={15} $ml={15}>
          <svg width="14" height="13" viewBox="0 0 14 13" fill="none" stroke="#666"><path d="M.5.5h13v12H.5zM3.5 3h7v7h-7zM5 5h4M5 7h4" /></svg>
        </ViewButton>
        <ViewButton $w={14} $ml={23}>
          <svg width="14" height="13" viewBox="0 0 14 13" fill="none" stroke="#666"><path d="M.5.5h13v12H.5zM7 0v8M.5 8.5H13" /></svg>
        </ViewButton>
        <ViewButton $w={8} $ml={17}><Minus size={9} strokeWidth={3} color="#666" /></ViewButton>
        <ZoomTrack><ZoomKnob /></ZoomTrack>
        <ViewButton $w={8}><Plus size={10} strokeWidth={3} color="#666" /></ViewButton>
        <ZoomValue>100 %</ZoomValue>
      </StatusBar>

      <Taskbar>
        <TaskSlot $w={48}><WinLogo /></TaskSlot>
        <TaskSlot><Search size={17} strokeWidth={1.4} style={{ transform: 'scaleX(-1)' }} color="#fff" /></TaskSlot>
        <TaskSlot><TaskViewIcon /></TaskSlot>
        <TaskSlot $open><FaEdge size={21} color="#0a78d7" /></TaskSlot>
        <TaskSlot><ExplorerIcon /></TaskSlot>
        <TaskSlot><StoreIcon /></TaskSlot>
        <TaskSlot $open><ChromeIcon /></TaskSlot>
        <TaskSlot $open><OfficeDoc main="#1e7145" letter="X" /></TaskSlot>
        <TaskSlot $open><OfficeDoc main="#2b579a" letter="W" /></TaskSlot>
        <TrayItem $w={14} $ml={693}><ChevronUp size={16} strokeWidth={1.4} /></TrayItem>
        <TrayItem $w={16} $ml={6}><BatteryIcon /></TrayItem>
        <TrayItem $w={14} $ml={11}><WifiIcon /></TrayItem>
        <TrayItem $w={17} $ml={5}><SpeakerIcon /></TrayItem>
        <TrayItem $w={17} $ml={9}><NoteIcon /></TrayItem>
        <TrayItem $w={20} $ml={11}>ESP</TrayItem>
        <Clock>
          <div>11:24 a. m.</div>
          <div>17/02/2016</div>
        </Clock>
      </Taskbar>

      <Dialog>
        <DialogTitle>
          BASE DE DATOS ...........
          <svg width="12" height="12" viewBox="0 0 12 12" stroke="#111" fill="none"><path d="M.5.5l11 11M11.5.5l-11 11" /></svg>
        </DialogTitle>
        <DialogBody>
          <TopRow>
            <FechaFrame>
              <Label $w={50} $lh={20}>FECHA</Label>
              <Sunken $w={70} $h={20}><TextCaret /></Sunken>
              <CalendarButton $bg="#efefef"><CalendarIcon /></CalendarButton>
            </FechaFrame>
            <Heading>REGISTRO DE DATOS</Heading>
            <RaisedButton $w={136} $mt={32} $bg="#e1e1e1" $c="#ff0000" $bold>GUARDAR</RaisedButton>
          </TopRow>

          <GroupBox $w={527} $h={41} $mt={15}>
            <Legend>RESPONSABLE DE LA ATENCION</Legend>
            <FieldRow $pad="10px 0 0 8px">
              <Label $w={57} $lh={21}>NOMBRE</Label>
              <Sunken $w={190} $h={22}><DropButton><Tri $d="down" $c="#000" /></DropButton></Sunken>
              <Label $w={27} $ml={16} $lh={21}>DNI</Label>
              <Sunken $w={78} $h={22} />
              <Label $w={34} $ml={40} $lh={21}>COLG</Label>
              <Sunken $w={54} $h={22} />
            </FieldRow>
          </GroupBox>

          <GroupBox $w={559} $h={273} $mt={15}>
            <Legend>REGISTRO</Legend>
            <RegistroTop>
              <Label $w={42} $lh={17}>H.CL.</Label>
              <Sunken $w={78} $h={19} />
              <PatientGrid>
                <Label $lh={17}>DNI</Label>
                <Sunken $w={87} $h={19} />
                <Label>PROCEDENCIA</Label>
                <Sunken $w={118} $h={22}><DropButton><Tri $d="down" $c="#000" /></DropButton></Sunken>
                <Label $lh={17}>EDAD</Label>
                <Sunken $w={111} $h={19} />
              </PatientGrid>
              <GroupBox $w={119} $h={57} $mt={5} $ml={42}>
                <Legend>SEXO</Legend>
                <SexRows>
                  <SexRow><Label $w={82}>MASCULINO</Label><Radio /></SexRow>
                  <SexRow><Label $w={82}>FEMENINO</Label><Radio /></SexRow>
                </SexRows>
              </GroupBox>
            </RegistroTop>
            <ModuleList>
              <ModuleRow />
              <ModuleRow />
              <ModuleRow />
              <ModuleRow />
            </ModuleList>
          </GroupBox>

          <ActionRow>
            <RaisedButton $c="#0000c0" $bold>REGISTRAR</RaisedButton>
            <RaisedButton>NUEVO RESPONSABLE</RaisedButton>
            <RaisedButton>ELIMINAR</RaisedButton>
            <RaisedButton $c="#0000c0">CERRAR</RaisedButton>
          </ActionRow>
        </DialogBody>
      </Dialog>
    </Page>
  );
}
